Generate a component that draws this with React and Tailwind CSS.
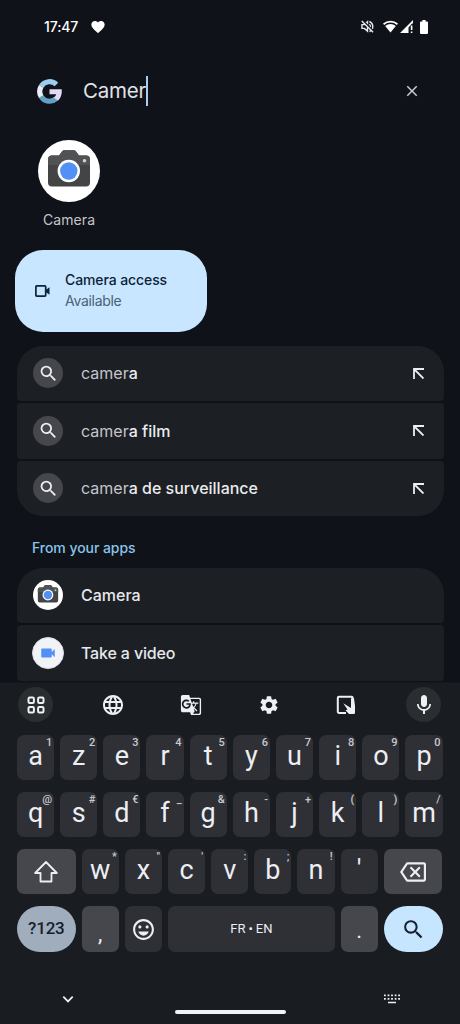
import {
  MdFavorite,
  MdSearch,
  MdClose,
  MdLanguage,
  MdGTranslate,
  MdSettings,
  MdMic,
  MdVideocam,
  MdOutlineEmojiEmotions,
  MdOutlineBackspace,
} from 'react-icons/md';

const SUGGESTIONS = ['a', 'a film', 'a de surveillance'];

const ROW_1 = [['a', '1'], ['z', '2'], ['e', '3'], ['r', '4'], ['t', '5'], ['y', '6'], ['u', '7'], ['i', '8'], ['o', '9'], ['p', '0']];
const ROW_2 = [['q', '@'], ['s', '#'], ['d', '€'], ['f', '_'], ['g', '&'], ['h', '-'], ['j', '+'], ['k', '('], ['l', ')'], ['m', '/']];
const ROW_3 = [['w', '*'], ['x', '"'], ['c', "'"], ['v', ':'], ['b', ';'], ['n', '!'], ["'", '']];

function GoogleLogo() {
  return (
    <svg viewBox="0 0 25 25" className="w-[25px] h-[25px]" fill="none" strokeWidth="5.200">
      <path d="M4.200 7.400A9.800 9.800 0 0 1 19.400 5.500" stroke="#9bcdf0" />
      <path d="M4.200 17.600A9.800 9.800 0 0 0 19 19.800" stroke="#639fc4" />
      <path d="M4.200 7.400A9.800 9.800 0 0 0 4.200 17.600" stroke="#e9edfa" />
      <path d="M12.500 10.300H24.700C25.300 15 23.700 19.200 20.800 21.800L16.700 18.600C18 17.700 18.900 16.500 19.200 15.200H12.500z" fill="#e2d9f5" />
    </svg>
  );
}

function CameraIcon({ className }) {
  return (
    <svg viewBox="0 0 62 62" className={className}>
      <circle cx="31" cy="31" r="31" fill="#fff" />
      <path d="M14 15.500h7l3-4a3 3 0 0 1 2.300-1.200h9.400a3 3 0 0 1 2.300 1.200l3 4h7a4 4 0 0 1 4 4V42.500a4 4 0 0 1-4 4H14a4 4 0 0 1-4-4V19.500a4 4 0 0 1 4-4z" fill="#434446" />
      <path d="M14 15.500h7l3-4a3 3 0 0 1 2.300-1.200h9.400a3 3 0 0 1 2.300 1.200l3 4h7a4 4 0 0 1 4 4V25H10v-5.500a4 4 0 0 1 4-4z" fill="#515254" />
      <circle cx="30.800" cy="31" r="11.200" fill="#fff" />
      <circle cx="30.800" cy="31" r="8.700" fill="#5390f5" />
      <circle cx="46.500" cy="20.700" r="1.800" fill="#d0d1d3" />
    </svg>
  );
}

function StatusBar() {
  return (
    <div className="h-[54px] pl-11 pr-8 pb-px flex items-center justify-between text-white">
      <div className="flex items-center gap-[12px]">
        <span className="font-['Inter'] text-[14px] font-medium tracking-[-0.1px] leading-none">17:47</span>
        <MdFavorite className="w-4 h-4" />
      </div>
      <div className="flex items-center">
        <svg viewBox="0 0 14 14" className="w-[13px] h-[13px] mr-[9px]" fill="none" stroke="#e8eaee" strokeWidth="1.500">
          <path d="M1 5h2.600L7 2v10L3.600 9H1z" />
          <path d="M9 4.600a3 3 0 0 1 0 4.800M9 1.600a5.800 5.800 0 0 1 0 10.800" />
          <path d="M2 .5L13.500 12" stroke="#0f1218" strokeWidth="1.500" />
          <path d="M.8 1L13 13.200" />
        </svg>
        <svg viewBox="0 0 16 13" className="w-[15px] h-[13px] mr-[2px]" fill="#fff">
          <path d="M0 3.300A12 12 0 0 1 16 3.300L14.800 4.900A10.300 10.300 0 0 0 1.200 4.900z" />
          <path d="M2.300 5.900A9 9 0 0 1 13.700 5.900L8 13z" />
        </svg>
        <svg viewBox="0 0 13 13" className="w-[13px] h-[13px] mr-[7px]" fill="#fff">
          <path d="M0 13L13 0V3.500H12L8.500 7.500V13z" />
          <path d="M10.800 5.500h1.600v4.500h-1.600zM10.800 11.400h1.600V13h-1.600z" />
        </svg>
        <svg viewBox="0 0 8 14" className="w-2 h-[14px]" fill="#fff">
          <path d="M2.400 0h3.200v1.400H7a1 1 0 0 1 1 1V13a1 1 0 0 1-1 1H1a1 1 0 0 1-1-1V2.400a1 1 0 0 1 1-1h1.400z" />
        </svg>
      </div>
    </div>
  );
}

function SearchField() {
  return (
    <div className="h-[74px] pl-[37px] pr-[39px] flex items-center">
      <GoogleLogo />
      <span className="ml-[21px] font-['Inter'] text-[20.500px] text-[#e1e3e8] tracking-[-0.2px] leading-none">Camer</span>
      <span className="w-0.5 h-[30px] bg-[#a9cdf0]" />
      <MdClose className="ml-auto w-[18px] h-[18px] text-[#c9cbd0]" />
    </div>
  );
}

function Suggestion({ rest, className }) {
  return (
    <div className={`h-[55.5px] pl-4 pr-5 flex items-center bg-[#1c1f23] ${className}`}>
      <span className="w-[30px] h-[30px] rounded-full bg-[#45474d] flex items-center justify-center">
        <MdSearch className="w-[21px] h-[21px] text-[#eceef2]" />
      </span>
      <span className="ml-[18px] text-[16px] text-[#c3c6cb]">
        camer<span className="font-[450] text-[#e9ebef]">{rest}</span>
      </span>
      <svg viewBox="0 0 11 11" className="ml-auto w-[11px] h-[11px]" fill="none" stroke="#eceef2" strokeWidth="1.800">
        <path d="M1 11V1H11M1 1l9.500 9.500" />
      </svg>
    </div>
  );
}

function Key({ label, hint }) {
  return (
    <div className="relative flex-1 h-[45px] pb-[3px] rounded-[7px] bg-[#2e3036] flex items-center justify-center text-[27px] leading-none text-[#eceef3]">
      {label}
      {hint && <span className="absolute top-[2px] right-[2px] text-[11px] font-medium leading-none text-[#c8cacf]">{hint}</span>}
    </div>
  );
}

function Keyboard() {
  return (
    <div className="h-[342px] bg-[#191c20] border-t border-[#14171b] font-['Roboto'] flex flex-col">
      {/* Toolbar */}
      <div className="h-[43px] pl-[18px] pr-[18.500px] flex items-center justify-between text-[#eef0f4]">
        <span className="w-[35px] h-[35px] rounded-full bg-[#2b2e31] flex items-center justify-center">
          <svg viewBox="0 0 18 18" className="w-[18px] h-[18px]" fill="none" stroke="currentColor" strokeWidth="2">
            <rect x="1.500" y="1.500" width="5.400" height="5.400" rx="1.200" />
            <rect x="11.100" y="1.500" width="5.400" height="5.400" rx="1.200" />
            <rect x="1.500" y="11.100" width="5.400" height="5.400" rx="1.200" />
            <rect x="11.100" y="11.100" width="5.400" height="5.400" rx="1.200" />
          </svg>
        </span>
        <span className="w-[35px] flex justify-center"><MdLanguage className="w-6 h-6" /></span>
        <span className="w-[35px] flex justify-center"><MdGTranslate className="w-[22px] h-[22px]" /></span>
        <span className="w-[35px] flex justify-center"><MdSettings className="w-[22px] h-[22px]" /></span>
        <span className="w-[35px] flex justify-center">
          <svg viewBox="0 0 20 20" className="w-5 h-5" fill="none">
            <path d="M10 18H3a1.200 1.200 0 0 1-1.200-1.200V3A1.200 1.200 0 0 1 3 1.800H15.500A1.200 1.200 0 0 1 16.700 3V9" stroke="currentColor" strokeWidth="2" />
            <path d="M7.200 8.200l5.300 3.400 2.500 1.400V3.200h3L19 11v6.800a1.200 1.200 0 0 1-1.200 1.200H13l-3.500-3.700 2-.8z" fill="currentColor" />
          </svg>
        </span>
        <span className="w-[35px] h-[35px] rounded-full bg-[#2b2e31] flex items-center justify-center">
          <MdMic className="w-6 h-6" />
        </span>
      </div>

      {/* Keys */}
      <div className="pt-[9px] pl-[17px] pr-[17.500px] flex flex-col gap-3">
        <div className="flex gap-1.5">
          {ROW_1.map(([label, hint]) => <Key key={label} label={label} hint={hint} />)}
        </div>
        <div className="flex gap-1.5">
          {ROW_2.map(([label, hint]) => <Key key={label} label={label} hint={hint} />)}
        </div>
        <div className="flex gap-1.5 text-[#eceef3]">
          <div className="w-[58.700px] h-[45px] rounded-[7px] bg-[#45474c] flex items-center justify-center">
            <svg viewBox="0 0 24 22" className="w-6 h-[22px]" fill="none" stroke="currentColor" strokeWidth="1.800" strokeLinejoin="round">
              <path d="M12 1L1.200 12H6.500v8.500h11V12h5.300z" />
            </svg>
          </div>
          {ROW_3.map(([label, hint]) => <Key key={label} label={label} hint={hint} />)}
          <div className="w-[58.700px] h-[45px] rounded-[7px] bg-[#45474c] flex items-center justify-center">
            <MdOutlineBackspace className="w-[26px] h-[26px]" />
          </div>
        </div>
        <div className="flex gap-1.5 text-[#eceef3]">
          <div className="w-[58.700px] h-[46px] rounded-full bg-[#9fadbd] text-[#17202b] text-[17px] font-medium tracking-[-0.2px] flex items-center justify-center">?123</div>
          <div className="w-[37.150px] h-[46px] rounded-[7px] bg-[#45474c] flex items-center justify-center pt-2 text-[22px]">,</div>
          <div className="w-[37.150px] h-[46px] rounded-[7px] bg-[#2e3036] flex items-center justify-center">
            <MdOutlineEmojiEmotions className="w-[25px] h-[25px]" />
          </div>
          <div className="flex-1 h-[46px] rounded-[7px] bg-[#2e3036] flex items-center justify-center text-[13px] tracking-[-0.1px]">FR • EN</div>
          <div className="w-[37.150px] h-[46px] rounded-[7px] bg-[#45474c] flex items-center justify-center pt-0.5 text-[22px]">.</div>
          <div className="w-[58.700px] h-[46px] rounded-full bg-[#c6e5ff] flex items-center justify-center">
            <MdSearch className="w-[25px] h-[25px] text-[#17202b]" />
          </div>
        </div>
      </div>

      {/* Navigation bar */}
      <div className="mt-auto h-[50px] pl-[60px] pr-[60px] flex items-center justify-between text-[#eceef3]">
        <svg viewBox="0 0 16 16" className="w-4 h-4" fill="none" stroke="currentColor" strokeWidth="1.800">
          <path d="M3.300 5.700L8 10.400l4.700-4.700" />
        </svg>
        <div className="mt-[25px] w-[111px] h-1 rounded-full bg-[#f1f3f5]" />
        <svg viewBox="0 0 16 10" className="w-4 h-[10px]" fill="currentColor">
          <path d="M0 .5h1.800v1.800H0zM3.600 .5h1.800v1.800H3.600zM7.100 .5h1.800v1.800H7.100zM10.700 .5h1.800v1.800h-1.800zM14.200 .5H16v1.800h-1.800zM0 4h1.800v1.800H0zM3.600 4h1.800v1.800H3.600zM7.100 4h1.800v1.800H7.100zM10.700 4h1.800v1.800h-1.800zM14.200 4H16v1.800h-1.800zM4 7.700h8v1.600H4z" />
        </svg>
      </div>
    </div>
  );
}

export default function App() {
  return (
    <div className="w-[460px] h-[1024px] overflow-hidden bg-[#0f1218] font-['Inter'] flex flex-col">
      <div className="h-[682px] overflow-hidden">
        <StatusBar />
        <SearchField />

        {/* Top app result */}
        <div className="mt-3 ml-[38px] w-[62px] flex flex-col items-center">
          <CameraIcon className="w-[62px] h-[62px]" />
          <span className="mt-[10px] h-4 leading-4 text-[14px] tracking-[0.1px] text-[#c4c6cb]">Camera</span>
        </div>

        {/* Settings shortcut */}
        <div className="mt-[22px] ml-[15px] w-[191.500px] h-[82px] rounded-[28px] bg-[#c8e6ff] pl-5 flex items-center">
          <svg viewBox="0 0 15 12" className="w-[15px] h-3 text-[#0b2438]" fill="none">
            <rect x=".9" y=".9" width="9.800" height="10.200" rx=".8" stroke="currentColor" strokeWidth="1.700" />
            <path d="M11 4.800L14.500 2.300V9.700L11 7.200z" fill="currentColor" />
          </svg>
          <div className="ml-[15px] pb-0.5 text-[14px] leading-[21px] tracking-[-0.1px]">
            <div className="font-[450] text-[#0b2438]">Camera access</div>
            <div className="text-[#4a6174] tracking-[-0.3px]">Available</div>
          </div>
        </div>

        <div className="mt-[13.500px] ml-[17px] w-[426.500px] flex flex-col gap-[2px]">
          {SUGGESTIONS.map((rest, i) => (
            <Suggestion
              key={rest}
              rest={rest}
              className={i === 0 ? 'rounded-t-[26px] rounded-b-[4px]' : i === 2 ? 'rounded-b-[26px] rounded-t-[4px]' : 'rounded-[4px]'}
            />
          ))}
        </div>

        <div className="mt-[22px] ml-8 h-5 leading-5 text-[14px] font-[450] tracking-[-0.050px] text-[#8ac4ea]">From your apps</div>

        <div className="mt-[10px] ml-[17px] w-[426.500px] flex flex-col gap-[2px] text-[16px] font-[450] text-[#e6e8ec]">
          <div className="h-[54.500px] pl-4 flex items-center rounded-t-[26px] rounded-b-[4px] bg-[#1c1f23]">
            <CameraIcon className="w-[30px] h-[30px]" />
            <span className="ml-[18px]">Camera</span>
          </div>
          <div className="h-[56px] pl-[15px] flex items-center rounded-[4px] bg-[#1c1f23]">
            <span className="w-8 h-8 rounded-full bg-[#f1f3f7] border border-[#d9dbe0] flex items-center justify-center">
              <MdVideocam className="w-[18px] h-[18px] text-[#5390f5]" />
            </span>
            <span className="ml-[17px] tracking-[-0.15px]">Take a video</span>
          </div>
        </div>
      </div>
      <Keyboard />
    </div>
  );
}
